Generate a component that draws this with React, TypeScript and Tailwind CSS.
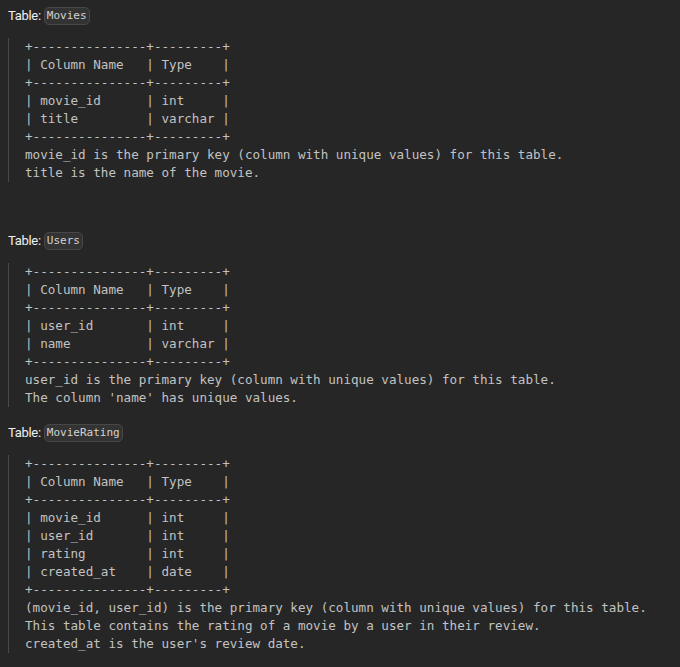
const movies = `+---------------+---------+
| Column Name   | Type    |
+---------------+---------+
| movie_id      | int     |
| title         | varchar |
+---------------+---------+
movie_id is the primary key (column with unique values) for this table.
title is the name of the movie.`;

const users = `+---------------+---------+
| Column Name   | Type    |
+---------------+---------+
| user_id       | int     |
| name          | varchar |
+---------------+---------+
user_id is the primary key (column with unique values) for this table.
The column 'name' has unique values.`;

const movieRating = `+---------------+---------+
| Column Name   | Type    |
+---------------+---------+
| movie_id      | int     |
| user_id       | int     |
| rating        | int     |
| created_at    | date    |
+---------------+---------+
(movie_id, user_id) is the primary key (column with unique values) for this table.
This table contains the rating of a movie by a user in their review.
created_at is the user's review date.`;

const TableLabel = ({ name, className = '' }: { name: string; className?: string }) => (
  <div className={`flex h-[20px] items-center gap-[3px] ${className}`}>
    <span className="font-['Roboto',sans-serif] text-[13px] tracking-[-0.3px] text-[#f0f0f0]">Table:</span>
    <code className="flex h-[18px] items-center rounded-[5px] border border-[#474747] bg-[#333333] px-[2px] font-['DejaVu_Sans_Mono',monospace] text-[11px] text-[#d4d4d4]">
      {name}
    </code>
  </div>
);

const Schema = ({ text }: { text: string }) => (
  <blockquote className="mt-[12px] border-l border-[#4a4a4a] pl-4">
    <pre className="font-['DejaVu_Sans_Mono',monospace] text-[12.6px] leading-[18px] whitespace-pre text-[#c2c2c2]">
      {text}
    </pre>
  </blockquote>
);

export default function App() {
  return (
    <div className="min-h-screen w-full bg-[#262626] px-2 pt-[6px]">
      <TableLabel name="Movies" />
      <Schema text={movies} />
      {/* empty paragraph in the original description */}
      <div className="h-[33px]" />
      <TableLabel name="Users" className="mt-[16px]" />
      <Schema text={users} />
      <TableLabel name="MovieRating" className="mt-[16px]" />
      <Schema text={movieRating} />
    </div>
  );
}
